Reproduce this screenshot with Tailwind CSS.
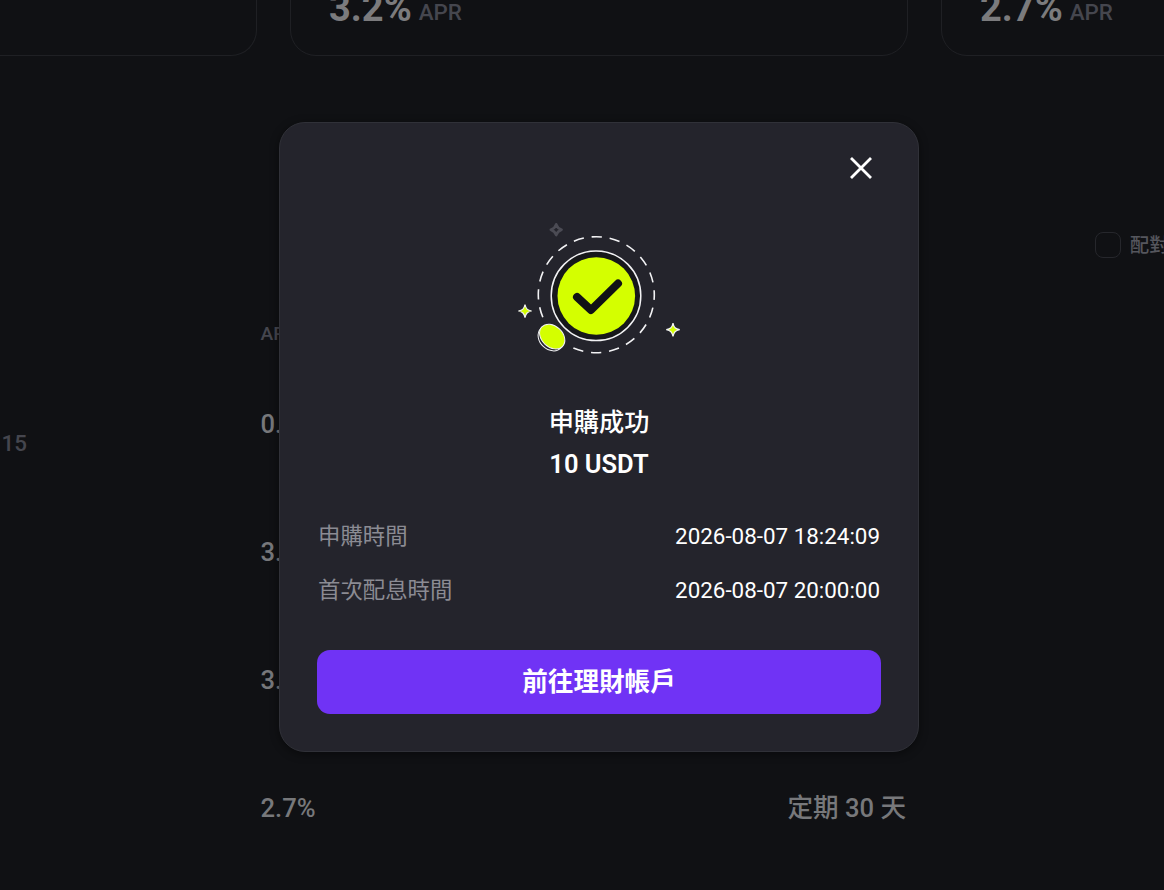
<!DOCTYPE html>
<html lang="zh-Hant">
<head>
<meta charset="utf-8">
<title>申購成功</title>
<script src="https://cdn.jsdelivr.net/npm/@tailwindcss/browser@4"></script>
</head>
<body class="relative h-[890px] w-[1164px] overflow-hidden bg-[#101114] font-[Roboto,'Noto_Sans_CJK_TC',sans-serif]">
<main class="flex h-full flex-col overflow-hidden">
  <section class="flex h-14 items-end gap-[33px]">
    <div class="h-24 w-[257px] shrink-0 rounded-br-[26px] border-r border-b border-[#1f2024]"></div>
    <div class="flex h-24 w-[618px] shrink-0 items-end gap-[7px] rounded-b-[26px] border border-[#1f2024] px-[38px] pb-[25px]">
      <span class="text-[38px] leading-[44px] font-bold text-[#7b7b7d]">3.2%</span><span class="pb-1 text-[22.4px] leading-7 font-medium text-[#45464e]">APR</span>
    </div>
    <div class="flex h-24 w-[618px] shrink-0 items-end gap-[7px] rounded-b-[26px] border border-[#1f2024] px-[38px] pb-[25px]">
      <span class="text-[38px] leading-[44px] font-bold text-[#7b7b7d]">2.7%</span><span class="pb-1 text-[22.4px] leading-7 font-medium text-[#45464e]">APR</span>
    </div>
  </section>
  <section class="mt-[175px] flex h-7 items-center pl-[1095px]">
    <span class="size-[26px] shrink-0 rounded-lg border border-[#26272c]"></span>
    <span class="mt-0.5 ml-[9px] shrink-0 text-[19.2px] font-medium whitespace-nowrap text-[#55565d]">配對</span>
  </section>
  <section class="mt-[57px]">
    <div class="h-[44px] pl-[260.5px] text-[19.2px] leading-[36px] font-medium text-[#45464e]">APR</div>
    <div class="grid h-32 grid-cols-[260.5px_527px_1fr] items-center text-[25.6px] font-medium text-[#77787b]">
      <span class="pt-[39px] pl-[1.5px] text-[22.4px] text-[#45464e]">15</span><span>0.8%</span>
    </div>
    <div class="grid h-32 grid-cols-[260.5px_527px_1fr] items-center text-[25.6px] font-medium text-[#77787b]"><span></span><span>3.2%</span></div>
    <div class="grid h-32 grid-cols-[260.5px_527px_1fr] items-center text-[25.6px] font-medium text-[#77787b]"><span></span><span>3.2%</span></div>
    <div class="grid h-32 grid-cols-[260.5px_527px_1fr] items-center text-[25.6px] font-medium text-[#77787b]"><span></span><span>2.7%</span><span class="pt-px">定期 30 天</span></div>
  </section>
</main>

<div role="dialog" class="absolute top-[122px] left-[279px] flex h-[630px] w-[640px] flex-col rounded-[26px] border border-[#303138] bg-[#24242c] px-[37px] shadow-[0_2px_10px_rgba(0,0,0,0.45)]">
  <button class="mt-[32px] mr-[7px] self-end" aria-label="關閉">
    <svg class="block size-[26px]" viewBox="0 0 26 26" fill="none" stroke="#fff" stroke-width="2.8"><path d="M3 3 23 23M23 3 3 23"/></svg>
  </button>
  <svg class="mt-[29px] ml-0.5 h-[160px] w-[200px] self-center" viewBox="0 0 200 160" fill="none">
    <path d="M56.200 14.300C57.200 17.600 58.300 18.700 61.600 19.700C58.300 20.700 57.200 21.800 56.200 25.100C55.200 21.800 54.100 20.700 50.800 19.700C54.100 18.700 55.200 17.600 56.200 14.300Z" stroke="#4b4b54" stroke-width="2.600" stroke-linejoin="round"/>
    <circle cx="96.300" cy="84.700" r="58" stroke="#f2f2f4" stroke-width="1.600" stroke-dasharray="10.400 7.822" stroke-dashoffset="5.200"/>
    <path d="M50 121 64 135" stroke="#24242c" stroke-width="10" stroke-linecap="round"/>
    <circle cx="96" cy="85.800" r="44.800" fill="#17181b" stroke="#f2f2f4" stroke-width="1.500"/>
    <circle cx="96.300" cy="86" r="38.800" fill="#d4ff00"/>
    <path d="M77 87 91 100 118 73.500" stroke="#111215" stroke-width="8" stroke-linecap="round" stroke-linejoin="round"/>
    <ellipse cx="50.800" cy="128.400" rx="14" ry="11" transform="rotate(43 50.800 128.400)" fill="#24242c" stroke="#f2f2f4" stroke-width="1"/>
    <ellipse cx="52.200" cy="126.600" rx="14.200" ry="10.500" transform="rotate(43 52.200 126.600)" fill="#d4ff00" stroke="#f2f2f4" stroke-width="1"/>
    <path d="M25 94.500C25.900 98.800 27.400 100.200 31.600 101C27.400 101.900 25.900 103.300 25 107.600C24.100 103.300 22.600 101.900 18.400 101C22.600 100.200 24.100 98.800 25 94.500Z" fill="#d4ff00" stroke="#f2f2f4" stroke-width="1.200"/>
    <path d="M173 113.100C173.900 117.500 175.400 118.900 179.700 119.700C175.400 120.600 173.900 122 173 126.400C172.100 122 170.600 120.600 166.300 119.700C170.600 118.900 172.100 117.500 173 113.100Z" fill="#d4ff00" stroke="#f2f2f4" stroke-width="1.200"/>
  </svg>
  <h2 class="mt-[32px] text-center text-[25.2px] leading-[42px] font-medium text-white">申購成功<br><span class="relative -top-px text-[25.5px] font-semibold">10 USDT</span></h2>
  <dl class="mt-[22px] px-px text-[22.4px] leading-[54px]">
    <div class="flex justify-between"><dt class="text-[#8b8b93]">申購時間</dt><dd class="text-white">2026-08-07 18:24:09</dd></div>
    <div class="flex justify-between"><dt class="text-[#8b8b93]">首次配息時間</dt><dd class="text-white">2026-08-07 20:00:00</dd></div>
  </dl>
  <button class="mt-[33px] h-16 w-full rounded-[13px] bg-[#7033f5] text-[25.6px] font-bold text-white">前往理財帳戶</button>
</div>
</body>
</html>
